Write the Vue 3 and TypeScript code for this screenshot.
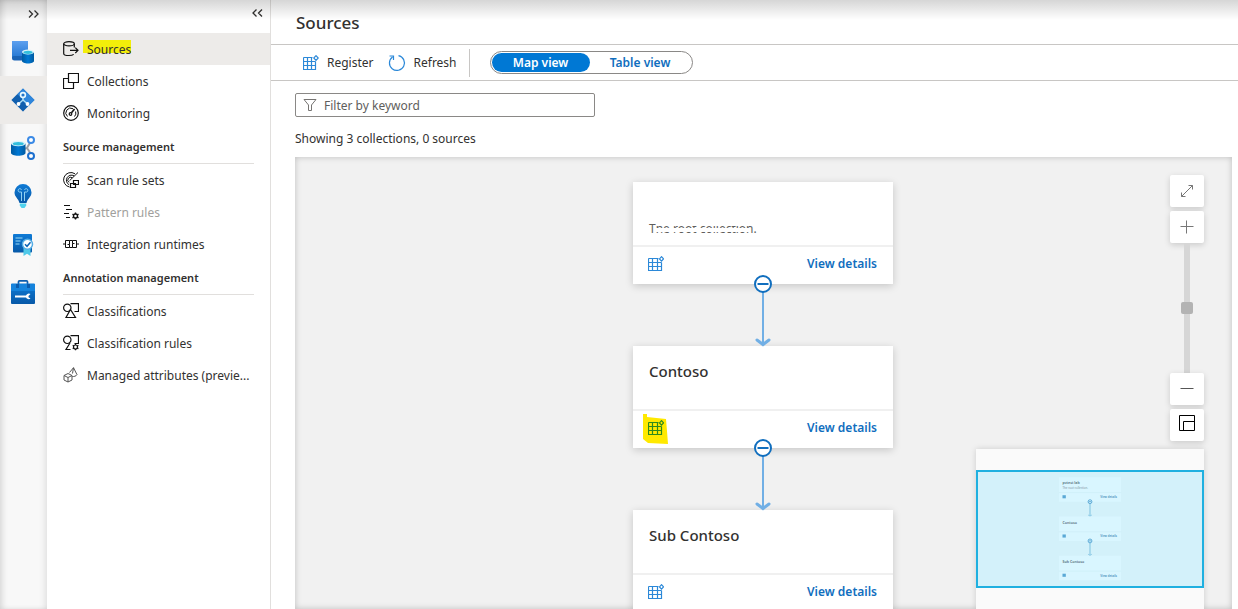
<script setup lang="ts">
import { ref } from 'vue'

interface NavItem {
  label: string
  icon: string
  active?: boolean
  disabled?: boolean
}
interface NavGroup {
  title?: string
  items: NavItem[]
}
interface Collection {
  name: string
  miniName: string
  description?: string
  marked?: boolean
}

const groups: NavGroup[] = [
  {
    items: [
      { label: 'Sources', icon: 'sources', active: true },
      { label: 'Collections', icon: 'collections' },
      { label: 'Monitoring', icon: 'monitoring' },
    ],
  },
  {
    title: 'Source management',
    items: [
      { label: 'Scan rule sets', icon: 'scan' },
      { label: 'Pattern rules', icon: 'pattern', disabled: true },
      { label: 'Integration runtimes', icon: 'runtime' },
    ],
  },
  {
    title: 'Annotation management',
    items: [
      { label: 'Classifications', icon: 'classes' },
      { label: 'Classification rules', icon: 'classrules' },
      { label: 'Managed attributes (previe...', icon: 'attributes' },
    ],
  },
]

const rail = ['Data catalog', 'Data map', 'Data sharing', 'Insights', 'Policy', 'Management']

const collections: Collection[] = [
  { name: '', miniName: 'pvtest lab', description: 'The root collection.' },
  { name: 'Contoso', miniName: 'Contoso', marked: true },
  { name: 'Sub Contoso', miniName: 'Sub Contoso' },
]

const view = ref<'map' | 'table'>('map')
const keyword = ref('')
</script>

<template>
  <div class="app">
    <nav class="rail" aria-label="Main">
      <button class="rail-toggle" aria-label="Expand">
        <svg width="12" height="10" viewBox="0 0 12 10" class="chev"><path d="M1 1.500L4.500 5 1 8.500M6.500 1.500L10 5 6.500 8.500" /></svg>
      </button>
      <button v-for="(name, i) in rail" :key="name" class="rail-item" :class="{ on: i === 1 }" :aria-label="name">
        <svg width="24" height="24" viewBox="0 0 24 24">
          <defs>
            <linearGradient id="g-light" x1="0" y1="0" x2="0" y2="1"><stop offset="0" stop-color="#5ea0ef" /><stop offset="1" stop-color="#1f74d0" /></linearGradient>
            <linearGradient id="g-deep" x1="0" y1="0" x2="0" y2="1"><stop offset="0" stop-color="#0f7bd6" /><stop offset="1" stop-color="#0859a8" /></linearGradient>
            <linearGradient id="g-side" x1="0" y1="0" x2="1" y2="0"><stop offset="0" stop-color="#005ba1" /><stop offset=".5" stop-color="#0078d4" /><stop offset="1" stop-color="#005ba1" /></linearGradient>
          </defs>
          <template v-if="i === 0">
            <path d="M1 1h16v18H3.500A2.500 2.500 0 0 1 1 16.500z" fill="url(#g-light)" />
            <path d="M1 17A2.500 2.500 0 0 1 3.500 16H12v4.500H3.500A2.500 2.500 0 0 1 1 18z" fill="#1a63b5" />
            <path d="M11 12v9c0 1.300 2.700 2.500 6 2.500s6-1.200 6-2.500v-9z" fill="url(#g-side)" />
            <ellipse cx="17" cy="12" rx="6" ry="2.500" fill="#d9f3fb" /><ellipse cx="17" cy="12.300" rx="4.600" ry="1.600" fill="#32bedd" />
          </template>
          <template v-else-if="i === 1">
            <path d="M12 .5L23.500 12 12 23.500.5 12z" fill="#1668b8" />
            <path d="M12 .5L23.500 12 18 17.500 6.500 6z" fill="#2f86dc" /><path d="M.5 12L6 6.500l11 11-5 6z" fill="#0f5aa6" opacity=".6" />
            <path d="M12 8v4L7.500 16M12 12l4.500 4" fill="none" stroke="#a9dcf5" stroke-width="1.600" />
            <circle cx="12" cy="7" r="2.400" fill="#2275c9" stroke="#e8f8ff" stroke-width="1.600" />
            <circle cx="7.500" cy="16" r="1.900" fill="#fff" /><circle cx="16.500" cy="16" r="1.900" fill="#fff" />
          </template>
          <template v-else-if="i === 2">
            <path d="M13 13l3-1 4-7M16 12l4 6" fill="none" stroke="#9a9fa6" stroke-width="2" />
            <circle cx="20" cy="4" r="3" fill="#fff" stroke="#3b8ae6" stroke-width="2" />
            <circle cx="20" cy="20" r="3" fill="#fff" stroke="#1d70cf" stroke-width="2" />
            <path d="M0 7.500V17c0 1.500 3.200 2.700 7.200 2.700s7.300-1.200 7.300-2.700V7.500z" fill="url(#g-side)" />
            <ellipse cx="7.250" cy="7.500" rx="7.250" ry="2.700" fill="#d9f3fb" /><ellipse cx="7.250" cy="7.800" rx="5.500" ry="1.700" fill="#32bedd" />
          </template>
          <template v-else-if="i === 3">
            <path d="M12 0a8.500 8.500 0 0 0-8.500 8.500c0 4.500 4 6 5 10.500h7c1-4.500 5-6 5-10.500A8.500 8.500 0 0 0 12 0z" fill="url(#g-deep)" />
            <path d="M10.500 17V8H8.300a1.700 1.700 0 1 1 2.200-2M13.500 17V8h2.200a1.700 1.700 0 1 0-2.200-2" fill="none" stroke="#8fd0f2" stroke-width="1" />
            <path d="M8.800 19.500h6.400v2L13.500 24h-3l-1.700-2.500z" fill="#50d2ee" />
          </template>
          <template v-else-if="i === 4">
            <rect x="2" y="2" width="19" height="18.500" rx="1" fill="url(#g-deep)" />
            <path d="M4.500 6h7M4.500 9h5M4.500 12h4" stroke="#9bdcf5" stroke-width="1.100" />
            <path d="M12.500 15h7v9L16 21.800 12.500 24z" fill="#50c9e8" />
            <circle cx="16.500" cy="12.300" r="5" fill="#fff" stroke="#56aee6" stroke-width="1.500" />
            <path d="M14 12.300l2 2 3.500-4" fill="none" stroke="#0b63b5" stroke-width="1.500" />
          </template>
          <template v-else>
            <path d="M7.500 4V1.800c0-.6.400-.9 1-.9h7c.6 0 1 .3 1 .9V4" fill="none" stroke="#0b5cad" stroke-width="1.700" />
            <rect x="0" y="3.500" width="24" height="20.500" rx="1" fill="url(#g-deep)" /><path d="M0 4h24v7H0z" fill="#1583dc" />
            <path d="M5 4h3v4H5zM16 4h3v4h-3z" fill="#0b5cad" />
            <path d="M4 15.500h11a3 3 0 0 1 4.500-1.400L17.500 16v1.200l2 1.400A3 3 0 0 1 15 17.500H4z" fill="#fff" />
          </template>
        </svg>
      </button>
    </nav>

    <aside class="side">
      <div class="side-top">
        <button aria-label="Collapse">
          <svg width="12" height="10" viewBox="0 0 12 10" class="chev"><path d="M5.500 1.500L2 5l3.500 3.500M11 1.500L7.500 5 11 8.500" /></svg>
        </button>
      </div>
      <section v-for="(g, gi) in groups" :key="gi">
        <h2 v-if="g.title">{{ g.title }}</h2>
        <a v-for="it in g.items" :key="it.label" href="#" class="nav-item" :class="{ active: it.active, disabled: it.disabled }">
          <svg width="16" height="16" viewBox="0 0 16 16" class="line">
            <template v-if="it.icon === 'sources'">
              <ellipse cx="6" cy="2.800" rx="5.300" ry="2.100" /><path d="M.7 2.800v9.600c0 1.200 2.400 2.100 5.300 2.100 2 0 3.800-.4 4.700-1.100M11.300 2.800v3.700M7 9.300h8M12.300 6.600L15 9.300 12.300 12" />
            </template>
            <path v-else-if="it.icon === 'collections'" d="M5.500.5h10v9h-10zM5.500 5.500h-5v10h10v-6" />
            <template v-else-if="it.icon === 'monitoring'">
              <circle cx="8" cy="8" r="7.300" /><path d="M4.500 11.500A4.800 4.800 0 0 1 10 3.700M12.600 6.500a4.800 4.800 0 0 1-1.100 5" stroke-width="1" /><circle cx="7.500" cy="9" r="1.300" /><path d="M8.500 7.800l3-3.800" stroke-width="1.600" />
            </template>
            <template v-else-if="it.icon === 'scan'">
              <path d="M6.500 15A7.300 7.300 0 1 1 12 1.800M6 12.700A5 5 0 1 1 11 3.800M6 10.400A2.800 2.800 0 1 1 9.300 5.800M6.500 8.700L15 .5" stroke-width="1" />
              <path d="M10.500 8.500h5v4h-5zM8.500 11.500h4v4h-5v-4z" fill="#fff" />
            </template>
            <template v-else-if="it.icon === 'pattern'">
              <path d="M1 1.500h6M3 5.500h6M1 9.500h5M3 13.500h4" /><circle cx="12.500" cy="12" r="2" stroke-width="1.400" />
              <path d="M12.500 8.500v1.500M12.500 14v1.500M9.500 10.200l1.200.8M14.300 13l1.200.8M9.500 13.800l1.200-.8M14.300 11l1.200-.8" stroke-width="1.400" />
            </template>
            <path v-else-if="it.icon === 'runtime'" d="M0 8h2.500M13.500 8H16M6.500 4.500h-4v7h4v-3h-2M6.500 4.500v4M9.500 11.500v-4M9.500 4.500h4v7h-4M9.500 7.500h2M6.500 4.500h3v3M6.500 11.500h3" stroke-width="1" />
            <template v-else-if="it.icon === 'classes' || it.icon === 'classrules'">
              <path d="M7.500.7h8v7.800h-4" /><circle cx="4.300" cy="4.800" r="3.700" fill="#fff" />
              <path v-if="it.icon === 'classes'" d="M7.500 6.500l5 8H3z" fill="#fff" />
              <template v-else>
                <path d="M7 8l-4 6.500h4.500" /><circle cx="12.500" cy="12" r="2" />
                <path d="M12.500 8.800V10M12.500 14v1.300M9.700 10.400l1.200.6M14.200 13l1.200.6M9.700 13.600l1.200-.6M14.200 11l1.200-.6" />
              </template>
            </template>
            <g v-else stroke="#555" stroke-width="1">
              <path d="M1 8.500l4-2 4 2v4.500l-4 2-4-2zM1 8.500l4 2 4-2M5 10.500V15M6.500 5.500L10.500.7l3.500 7c-1 1.500-3 2-4.700 1.800M10.500.7L9.500 6.500" />
            </g>
          </svg>
          <span :class="{ mark: it.active }">{{ it.label }}</span>
        </a>
      </section>
    </aside>

    <main class="main">
      <header><h1>Sources</h1></header>
      <div class="toolbar">
        <button class="tool">
          <svg width="16" height="16" viewBox="0 0 16 16" class="grid-icon"><path d="M.5 2.500h9M.5 2.500v12h12V6.500M.5 6.500h12M.5 10.500h12M4.500 2.500v12M8.500 2.500v12" /><path d="M13 .7l2.200 2.300L13 5.300 10.800 3z" /></svg>
          <span>Register</span>
        </button>
        <button class="tool">
          <svg width="18" height="18" viewBox="0 0 18 18" class="grid-icon"><path d="M10.500 1.600a7.500 7.500 0 1 1-6 1.300M1.500 2h4v4" /></svg>
          <span>Refresh</span>
        </button>
        <div class="sep"></div>
        <div class="switch">
          <button :class="{ on: view === 'map' }" @click="view = 'map'">Map view</button>
          <button :class="{ on: view === 'table' }" @click="view = 'table'">Table view</button>
        </div>
      </div>

      <div class="content">
        <label class="filter">
          <svg width="14" height="14" viewBox="0 0 14 14"><path d="M1 1.500h12L8.500 7v5.500h-3V7z" /></svg>
          <input v-model="keyword" type="text" placeholder="Filter by keyword" aria-label="Filter by keyword" />
        </label>
        <p class="count">Showing 3 collections, 0 sources</p>

        <div class="map">
          <div class="tree">
            <template v-for="(c, i) in collections" :key="i">
              <article class="card">
                <div class="card-body">
                  <h3>{{ c.name }}</h3>
                  <p v-if="c.description">{{ c.description }}</p>
                </div>
                <div class="card-foot">
                  <button class="reg" :aria-label="'Register a source in ' + c.miniName">
                    <svg v-if="c.marked" class="blot" width="28" height="32" viewBox="0 0 28 32"><path d="M2 1h4v3l19 2 1 12 1 13-20-1-5-4z" /></svg>
                    <svg width="16" height="16" viewBox="0 0 16 16" class="grid-icon" :class="{ green: c.marked }"><path d="M.5 2.500h10M.5 2.500v12h13V6.500M.5 6.500h13M.5 10.500h13M4.500 2.500v12M9.500 2.500v12" /><path d="M13.500.7l2 2.200-2 2.200-2-2.200z" /></svg>
                  </button>
                  <a href="#">View details</a>
                </div>
              </article>
              <svg v-if="i < 2" class="link" width="20" height="72" viewBox="0 0 20 72">
                <path d="M10 17v52" stroke="#71afe5" stroke-width="2" /><path d="M4 65l6 4.500 6-4.500" fill="none" stroke="#71afe5" stroke-width="3" stroke-linecap="round" />
                <circle cx="10" cy="9" r="8" fill="#fff" stroke="#106ebe" stroke-width="2" /><path d="M4.500 9h11" stroke="#106ebe" stroke-width="2" />
              </svg>
            </template>
          </div>

          <div class="controls">
            <button aria-label="Full screen"><svg width="14" height="14" viewBox="0 0 14 14" stroke="#777"><path d="M1.500 12.500l11-11M8.500 1.500h4v4M1.500 8.500v4h4" /></svg></button>
            <button aria-label="Zoom in"><svg width="14" height="14" viewBox="0 0 14 14" stroke="#777"><path d="M.5 6.500h13M6.500.5v13" /></svg></button>
            <div class="track"><span></span></div>
            <button aria-label="Zoom out"><svg width="14" height="14" viewBox="0 0 14 14" stroke="#555"><path d="M.5 6.500h13" /></svg></button>
            <button class="mini-toggle" aria-label="Mini map"><svg width="16" height="16" viewBox="0 0 16 16" stroke="#000"><path d="M.5.5h15v15H.5zM4.500 15.500v-9h11" /></svg></button>
          </div>

          <div class="mini">
            <div class="mini-view">
              <svg viewBox="0 0 936 476">
                <g v-for="(c, i) in collections" :key="i" :transform="`translate(338 ${22 + i * 164})`">
                  <path d="M0 0h260v102H0z" fill="#d9f6ff" /><path d="M0 64h260" stroke="#cdeef6" stroke-width="3" />
                  <text x="15" y="30" class="mt">{{ c.miniName }}</text>
                  <text v-if="c.description" x="15" y="51" class="md">{{ c.description }}</text>
                  <path d="M15 75h14v13H15z" fill="#5aa9d6" />
                  <text x="173" y="87" class="ml">View details</text>
                  <g v-if="i < 2"><path d="M130 110v50M123 158l7 5 7-5" fill="none" stroke="#7abfe0" stroke-width="4" /><circle cx="130" cy="102" r="8" fill="#d9f6ff" stroke="#3391c8" stroke-width="3" /><path d="M125 102h10" stroke="#3391c8" stroke-width="3" /></g>
                </g>
              </svg>
            </div>
          </div>
        </div>
      </div>
    </main>
    <div class="top-shade"></div>
  </div>
</template>

<style>
html, body, #app { height: 100%; margin: 0; overflow: hidden; }
</style>

<style scoped>
.app { position: relative; display: flex; height: 100%; background: #fff; color: #323130; font: 12px/16px "Noto Sans", "Open Sans", sans-serif; }
.app * { box-sizing: border-box; }
button { padding: 0; border: 0; background: none; font: inherit; color: inherit; cursor: pointer; }
a { color: inherit; text-decoration: none; }
h1, h2, h3, p { margin: 0; }
svg { flex: none; display: block; }
.top-shade { position: absolute; inset: 0 0 auto; height: 20px; background: linear-gradient(rgba(0, 0, 0, .16), rgba(0, 0, 0, 0)); pointer-events: none; }
.chev path { fill: none; stroke: #323130; stroke-width: 1.300; }

.rail { flex: none; width: 47px; background: #f8f8f8; box-shadow: inset 4px 0 6px -2px rgba(0, 0, 0, .14), inset -4px 0 6px -2px rgba(0, 0, 0, .1); }
.rail-toggle { display: flex; align-items: center; justify-content: flex-end; width: 100%; height: 28px; padding-right: 7px; }
.rail-item { display: flex; align-items: center; justify-content: center; width: 100%; height: 48px; padding-right: 2px; }
.rail-item.on { background: #edebe9; }

.side { flex: none; width: 224px; border-right: 1px solid #e1dfdd; }
.side-top { display: flex; justify-content: flex-end; align-items: center; height: 33px; padding: 0 7px 8px 0; }
.side h2 { height: 35px; margin: 0 16px; padding-top: 10px; border-bottom: 1px solid #e1dfdd; font-size: 11px; line-height: 16px; font-weight: 600; }
.nav-item { display: flex; align-items: center; gap: 8px; height: 32px; padding: 0 16px; }
.nav-item.active { background: #edebe9; }
.nav-item.disabled { color: #a19f9d; }
.nav-item span { padding-top: 2px; white-space: nowrap; }
.nav-item .mark { background: linear-gradient(#f3ee0a, #f3ee0a) 0 0 / 100% 13px no-repeat; margin-left: -4px; padding-left: 4px; }
.line { fill: none; stroke: #111; stroke-width: 1.200; }

.main { flex: 1; min-width: 0; display: flex; flex-direction: column; }
header { height: 45px; padding: 11px 25px; border-bottom: 1px solid #c8c6c4; }
h1 { font-size: 17px; line-height: 24px; font-weight: 500; }
.toolbar { display: flex; align-items: center; height: 36px; padding-left: 32px; border-bottom: 1px solid #c8c6c4; }
.tool { display: flex; align-items: center; gap: 8px; margin-right: 14px; }
.tool span { padding-top: 1px; }
.tool + .sep { margin-left: -2px; }
.grid-icon { fill: none; stroke: #2b88d8; stroke-width: 1.200; }
.grid-icon.green { stroke: #2f8a1c; position: relative; }
.sep { width: 1px; height: 28px; margin-right: 20px; background: #c8c6c4; }
.switch { display: flex; height: 23px; padding: 1px; border: 1px solid #8a8886; border-radius: 12px; color: #106ebe; font-weight: 600; }
.switch button { width: 98px; border-radius: 10px; }
.switch button + button { width: 101px; }
.switch .on { background: #0078d4; color: #fff; }

.content { flex: 1; min-height: 0; display: flex; flex-direction: column; padding: 12px 6px 0 24px; }
.filter { display: flex; align-items: center; gap: 7px; width: 300px; height: 24px; padding: 0 7px; border: 1px solid #8a8886; border-radius: 2px; }
.filter path { fill: none; stroke: #767472; }
.filter input { flex: 1; min-width: 0; border: 0; padding: 1px 0 0; outline: 0; font: inherit; background: none; }
.filter input::placeholder { color: #605e5c; opacity: 1; }
.count { margin: 14px 0 10px; }

.map { position: relative; flex: 1; min-height: 0; overflow: hidden; background: #f1f1f1; box-shadow: inset 0 0 6px rgba(0, 0, 0, .22); }
.tree { display: flex; flex-direction: column; align-items: center; padding: 25px 1px 0 0; }
.card { flex: none; width: 260px; height: 102px; background: #fff; box-shadow: 0 2px 8px rgba(0, 0, 0, .18); }
.card-body { height: 65px; padding: 14px 16px 0; border-bottom: 2px solid #f0f0f0; }
.card h3 { height: 22px; font-size: 15px; line-height: 22px; font-weight: 500; }
.card p { position: relative; width: max-content; margin-top: 3px; color: #605e5c; }
.card p::before { content: ""; position: absolute; inset: 0 7px 11px 7px; background: #fff; }
.card p::after { content: ""; position: absolute; inset: 7px 7px 5px 7px; background: #fff; }
.card-foot { display: flex; align-items: center; justify-content: space-between; height: 35px; padding: 0 16px 2px 15px; color: #106ebe; font-weight: 600; }
.reg { position: relative; }
.blot { position: absolute; left: -7px; top: -7px; fill: #ffe900; }
.link { position: relative; margin: -9px 0 -1px; }

.controls { position: absolute; top: 18px; right: 28px; display: flex; flex-direction: column; align-items: center; gap: 4px; }
.controls button { display: flex; align-items: center; justify-content: center; width: 34px; height: 32px; border-radius: 2px; background: #fff; box-shadow: 0 2px 6px rgba(0, 0, 0, .16); }
.controls .mini-toggle { padding-bottom: 4px; }
.controls svg { fill: none; }
.track { display: flex; align-items: center; justify-content: center; width: 6px; height: 130px; margin: -4px 0; background: #d6d6d6; }
.track span { flex: none; width: 12px; height: 12px; border-radius: 2px; background: #b3b3b3; }

.mini { position: absolute; top: 292px; right: 28px; width: 228px; height: 162px; padding-top: 21px; background: #fafafa; box-shadow: 0 0 6px rgba(0, 0, 0, .15); }
.mini-view { border: 2px solid #1fb0e0; background: #d3f1fa; }
.mini-view svg { width: 100%; }
.mt { font-size: 15px; font-weight: 600; fill: #55707c; }
.md { font-size: 12px; fill: #7a929c; }
.ml { font-size: 12px; font-weight: 600; fill: #4b93bd; }
</style>
